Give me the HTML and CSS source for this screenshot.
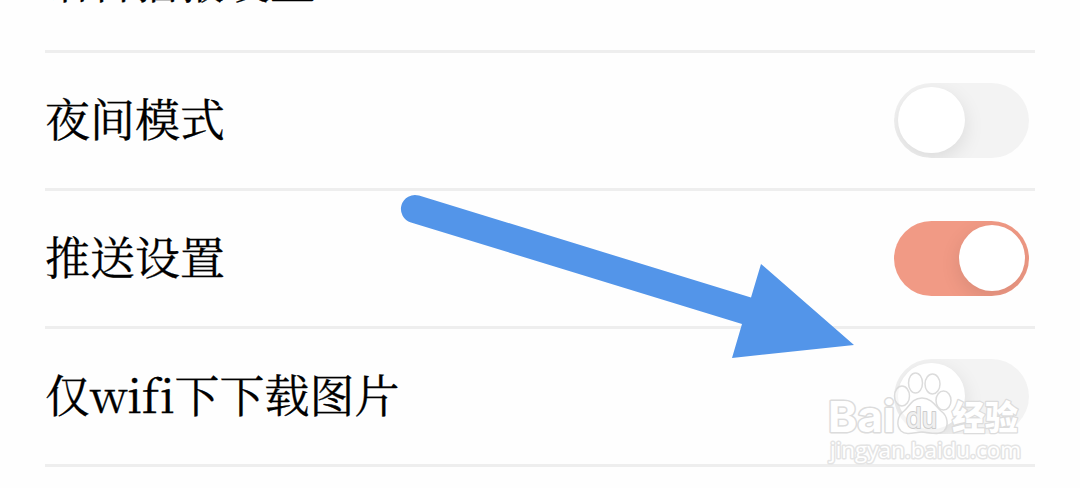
FILE: index.html
```html
<!DOCTYPE html>
<html lang="zh-CN">
<head>
    <meta charset="UTF-8">
    <meta name="viewport" content="width=device-width, initial-scale=1.0">
    <title>设置</title>
    <link rel="stylesheet" href="styles.css">
</head>
<body>

<!-- Settings list, scrolled so the first row is almost off screen -->
<div class="settings">
    <div class="setting-row">
        <div class="label">语音播报设置</div>
    </div>
    <div class="setting-row">
        <div class="label">夜间模式</div>
        <div class="toggle"><div class="knob"></div></div>
    </div>
    <div class="setting-row">
        <div class="label">推送设置</div>
        <div class="toggle on"><div class="knob"></div></div>
    </div>
    <div class="setting-row">
        <div class="label">仅<span class="latin">wifi</span>下下载图片</div>
        <div class="toggle"><div class="knob"></div></div>
    </div>
</div>

<!-- Arrow and watermark -->
<svg class="overlay" width="1080" height="488" viewBox="0 0 1080 488">
    <path class="arrow" d="M419 195.500L751 297.500L761 264L854 345L732 358L742 324L411 222.500A14 14 0 0 1 419 195.500Z"/>

    <g class="watermark">
        <text class="brand" x="828" y="432" textLength="67" lengthAdjust="spacingAndGlyphs">Bai</text>
        <ellipse cx="915.500" cy="383" rx="7" ry="10"/>
        <ellipse cx="932.500" cy="384" rx="7.500" ry="10"/>
        <ellipse cx="902" cy="396" rx="7.500" ry="10"/>
        <ellipse cx="943.500" cy="400.500" rx="7.500" ry="9.500"/>
        <path d="M922 398C932 398 936 407 941 411C948 416 949 426 944 431C938 436 929 432 922 432C915 432 907 436 901 431C896 426 897 416 904 411C909 407 912 398 922 398Z"/>
        <text class="du" x="906" y="428" textLength="31" lengthAdjust="spacingAndGlyphs">du</text>
        <text class="name" x="952" y="430" textLength="66" lengthAdjust="spacingAndGlyphs">经验</text>
        <text class="site" x="830" y="458" textLength="191" lengthAdjust="spacingAndGlyphs">jingyan.baidu.com</text>
    </g>
</svg>

</body>
</html>
```
FILE: styles.css
```css
* {
    margin: 0;
    padding: 0;
    box-sizing: border-box;
}

body {
    height: 488px;
    overflow: hidden;
    background-color: #fefefe;
    color: #000;
    font-family: "Noto Serif CJK SC", "Noto Serif SC", "Noto Sans CJK SC", serif;
}

.settings {
    margin: -85px 45px 0;
}

.setting-row {
    display: flex;
    justify-content: space-between;
    align-items: center;
    height: 138px;
    padding: 0 6px 0 0;
    border-bottom: 3px solid #eee;
}

.label {
    padding-bottom: 5px;
    font-size: 45px;
    line-height: 66px;
    white-space: nowrap;
    -webkit-text-stroke: 0.3px #000;
}

.latin {
    font-variant-ligatures: none;
    letter-spacing: -0.4px;
}

.toggle {
    display: flex;
    align-items: center;
    width: 135px;
    height: 75px;
    padding: 0 4px 1px;
    border-radius: 38px;
    background-color: #f3f3f3;
    overflow: hidden;
}

.toggle.on {
    justify-content: flex-end;
    background-color: #f19a85;
}

.knob {
    width: 66.5px;
    height: 66.5px;
    border-radius: 50%;
    background-color: #fff;
    box-shadow: 0 6px 20px rgba(0, 0, 0, 0.1);
}

.overlay {
    position: absolute;
    top: 0;
    left: 0;
}

.arrow {
    fill: #5395e9;
}

.watermark {
    fill: rgba(255, 255, 255, 0.6);
    stroke: #dcdcdc;
    stroke-width: 1.5;
    stroke-linejoin: round;
}

.watermark text {
    fill: #fff;
    paint-order: stroke;
}

.brand {
    font: 700 43px Inter, sans-serif;
    stroke-width: 3;
}

.watermark .du {
    font: 500 28px Inter, sans-serif;
    fill: #f0f0f0;
    stroke: #ccc;
    stroke-width: 2;
}

.name {
    font: 900 34px "Noto Sans CJK SC", sans-serif;
    stroke-width: 2.5;
}

.site {
    font: 500 22px "Open Sans", sans-serif;
    stroke: #e4e4e4;
    stroke-width: 3;
}
```
